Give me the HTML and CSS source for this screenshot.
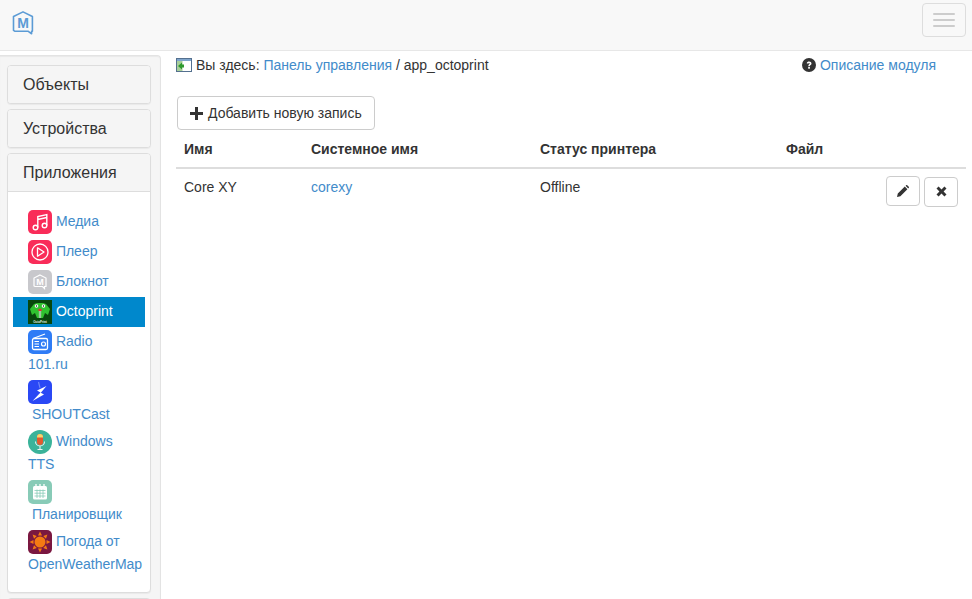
FILE: index.html
```html
<!DOCTYPE html>
<html lang="ru">
<head>
<meta charset="utf-8">
<title>app_octoprint</title>
<link rel="stylesheet" href="styles.css">
</head>
<body>
<nav class="navbar">
  <a class="brand" href="#">
    <svg width="24" height="24" viewBox="0 0 24 24"><path d="M11 .9 20.400 5.500V20.300H19.600V22.800L16.300 20.300H3L1.500 19.300V5.500Z" fill="none" stroke="#5b9bd5" stroke-width="1.600" stroke-linejoin="round"/><text x="11.200" y="16.500" text-anchor="middle" class="logo-m">M</text></svg>
  </a>
  <button class="toggle"><span></span><span></span><span></span></button>
</nav>
<div class="layout">
  <aside class="well">
    <div class="panel"><div class="panel-heading">Объекты</div></div>
    <div class="panel"><div class="panel-heading">Устройства</div></div>
    <div class="panel">
      <div class="panel-heading">Приложения</div>
      <ul class="apps">
        <li><a href="#"><svg class="ico" viewBox="0 0 24 24"><rect width="24" height="24" rx="5" fill="#f92c59"/><g fill="none" stroke="#fff" stroke-width="1.400"><circle cx="7.500" cy="17.500" r="2.300"/><circle cx="16.500" cy="15.500" r="2.300"/><path d="M9.800 17.500V6.500L18.800 4.500V15.500M9.800 9.500 18.800 7.500"/></g></svg>&nbsp;Медиа</a></li>
        <li><a href="#"><svg class="ico" viewBox="0 0 24 24"><rect width="24" height="24" rx="5" fill="#f92c59"/><circle cx="12" cy="12" r="8" fill="none" stroke="#fff" stroke-width="1.300"/><path d="M9.500 7.800 16 12 9.500 16.200Z" fill="none" stroke="#fff" stroke-width="1.300" stroke-linejoin="round"/></svg>&nbsp;Плеер</a></li>
        <li><a href="#"><svg class="ico" viewBox="0 0 24 24"><rect width="24" height="24" rx="5" fill="#c8c8cc"/><path d="M12 5 18 8V16.500H16.500V18.500L14.500 16.500H7L6 16V8Z" fill="none" stroke="#fff" stroke-width="1.200"/><text x="12" y="15" text-anchor="middle" class="logo-s">M</text></svg>&nbsp;Блокнот</a></li>
        <li class="active"><a href="#"><svg class="ico" viewBox="0 0 24 24"><rect width="24" height="24" fill="#07470c"/><path d="M2 9 6 4 9 3H15L18 4 22 9 20 15 17 13 15 18H9L7 13 4 15Z" fill="#2fc22f"/><circle cx="8.500" cy="6" r="1.800" fill="#fff"/><circle cx="15.500" cy="6" r="1.800" fill="#fff"/><circle cx="8.500" cy="6" r=".7" fill="#111"/><circle cx="15.500" cy="6" r=".7" fill="#111"/><ellipse cx="12" cy="10" rx="1.800" ry="1.200" fill="#d33"/><rect x="10.800" y="11" width="2.400" height="7" fill="#9bc8a0"/><text x="12" y="22.500" text-anchor="middle" class="logo-o">OctoPrint</text></svg>&nbsp;Octoprint</a></li>
        <li><a href="#"><svg class="ico" viewBox="0 0 24 24"><rect width="24" height="24" rx="5" fill="#2f7cf6"/><path d="M5 8.500 17 4" stroke="#fff" stroke-width="1.200"/><rect x="4.500" y="8.500" width="15" height="11" rx="1.500" fill="none" stroke="#fff" stroke-width="1.300"/><path d="M6.500 11.500H11M6.500 14H11M6.500 16.500H11" stroke="#fff"/><circle cx="15.500" cy="14" r="2" fill="none" stroke="#fff" stroke-width="1.200"/></svg>&nbsp;Radio 101.ru</a></li>
        <li><a href="#"><svg class="ico" viewBox="0 0 24 24"><rect width="24" height="24" rx="5" fill="#2a48f5"/><path d="M10.500 2 12 8" stroke="#6f86fa" stroke-width="1.200"/><path d="M18.500 6 9 10.500 12.500 12.500 4.500 21 16 14.500 12.800 12.800Z" fill="#fff"/></svg>&nbsp;SHOUTCast</a></li>
        <li><a href="#"><svg class="ico" viewBox="0 0 24 24"><circle cx="12" cy="12" r="12" fill="#3ab39a"/><rect x="9" y="4" width="6" height="11" rx="3" fill="#e2592f"/><path d="M9 7.500V7a3 3 0 0 1 6 0v.5Z" fill="#f5d76e"/><path d="M7.500 11.500a4.500 4.500 0 0 0 9 0M12 16V19M9.500 19.500H14.500" fill="none" stroke="#e8f5f1" stroke-width="1.100"/></svg>&nbsp;Windows TTS</a></li>
        <li><a href="#"><svg class="ico" viewBox="0 0 24 24"><rect width="24" height="24" rx="5" fill="#88cbb7"/><rect x="5" y="6" width="14" height="13.500" rx="1.500" fill="#fff"/><path d="M8 4V7.500M12 4V7.500M16 4V7.500" stroke="#fff" stroke-width="1.300"/><path d="M6.500 10.500H17.500M6.500 13.200H17.500M6.500 16H17.500M9 9.500V18M12 9.500V18M15 9.500V18" stroke="#88cbb7" stroke-width=".8"/></svg>&nbsp;Планировщик</a></li>
        <li><a href="#"><svg class="ico" viewBox="0 0 24 24"><rect width="24" height="24" rx="5" fill="#7a1740"/><g fill="#f47a12"><path d="M12 1.500 14 5.500H10ZM12 22.500 14 18.500H10ZM1.500 12 5.500 10V14ZM22.500 12 18.500 10V14ZM4.600 4.600 8.800 6 6 8.800ZM19.400 4.600 18 8.800 15.200 6ZM4.600 19.400 6 15.200 8.800 18ZM19.400 19.400 15.200 18 18 15.200Z"/><circle cx="12" cy="12" r="5.500"/></g></svg>&nbsp;Погода от OpenWeatherMap</a></li>
      </ul>
    </div>
    <div class="panel"><div class="panel-heading">&nbsp;</div></div>
  </aside>
  <main class="content">
    <div class="crumbs">
      <div class="crumb-left">
        <svg class="crumb-icon" width="16" height="16" viewBox="0 0 16 16"><rect x=".5" y="1.500" width="15" height="13" fill="#fff" stroke="#54708f"/><rect x="1" y="2" width="14" height="2" fill="#7fa5cc"/><rect x="1" y="4" width="5.500" height="10" fill="#a9cf9a"/><path d="M2 9 6 5.500V7.500H8V10.500H6V12.500Z" fill="#2e9a2e"/></svg>
        <span>Вы здесь: <a href="#">Панель управления</a> / app_octoprint</span>
      </div>
      <div class="crumb-right">
        <svg width="14" height="14" viewBox="0 0 14 14"><circle cx="7" cy="7" r="7" fill="#333"/><path d="M4.700 5.300C4.900 4 6 3.400 7.100 3.400 8.500 3.400 9.500 4.200 9.500 5.400 9.500 6.900 7.800 7 7.800 8.300H6.200C6.200 6.500 7.700 6.300 7.700 5.500 7.700 5.100 7.400 4.900 7 4.900 6.600 4.900 6.300 5.200 6.200 5.700Z" fill="#fff"/><rect x="6.200" y="9" width="1.700" height="1.700" fill="#fff"/></svg>
        <a href="#">Описание модуля</a>
      </div>
    </div>
    <button class="btn add">
      <svg width="13" height="13" viewBox="0 0 13 13"><path d="M5 0H8V5H13V8H8V13H5V8H0V5H5Z" fill="#333"/></svg>
      Добавить новую запись
    </button>
    <table class="grid">
      <thead>
        <tr><th class="c1">Имя</th><th class="c2">Системное имя</th><th class="c3">Статус принтера</th><th class="c4">Файл</th><th></th></tr>
      </thead>
      <tbody>
        <tr>
          <td>Core XY</td>
          <td><a href="#">corexy</a></td>
          <td>Offline</td>
          <td></td>
          <td class="actions">
            <button class="btn small"><svg width="12" height="12" viewBox="0 0 12 12"><path d="M0 12 .8 8.600 7.800 1.600 10.400 4.200 3.400 11.200ZM8.600.8 9.200.2C9.500-.1 9.900-.1 10.200.2L11.800 1.800C12.100 2.100 12.100 2.500 11.800 2.800L11.200 3.400Z" fill="#333"/></svg></button>
            <button class="btn small"><svg width="11" height="11" viewBox="0 0 11 11"><path d="M2.600.5 5.500 3.400 8.400.5 10.500 2.600 7.600 5.500 10.500 8.400 8.400 10.500 5.500 7.600 2.600 10.500.5 8.400 3.400 5.500.5 2.600Z" fill="#333"/></svg></button>
          </td>
        </tr>
      </tbody>
    </table>
  </main>
</div>
</body>
</html>
```
FILE: styles.css
```css
* { box-sizing: border-box; }
html, body { height: 100%; }
body {
  margin: 0;
  overflow: hidden;
  background: #fff;
  color: #333;
  font: 14px/20px "Liberation Sans", Arial, sans-serif;
}
a { color: #428bca; text-decoration: none; }
.navbar {
  display: flex;
  justify-content: space-between;
  align-items: flex-start;
  height: 51px;
  padding: 3px 6px 0 12px;
  background: #f8f8f8;
  border-bottom: 1px solid #e7e7e7;
}
.brand { display: block; margin-top: 8px; height: 24px; line-height: 0; }
.logo-m { font: bold 14px "Liberation Sans", sans-serif; fill: #5b9bd5; }
.logo-s { font: bold 9px "Liberation Sans", sans-serif; fill: #fff; }
.logo-o { font: bold 3px "Liberation Sans", sans-serif; fill: #e6f2e6; }
.toggle {
  display: flex;
  flex-direction: column;
  gap: 4px;
  width: 44px;
  height: 34px;
  padding: 9px 10px;
  background: transparent;
  border: 1px solid #ddd;
  border-radius: 4px;
}
.toggle span { display: block; width: 22px; height: 2px; background: #ccc; border-radius: 1px; }
.layout { display: flex; align-items: flex-start; padding-top: 4px; }
.well {
  flex: none;
  width: 161px;
  padding: 9px 9px 0 7px;
  background: #f5f5f5;
  border: 1px solid #e3e3e3;
  border-width: 1px 1px 0 0;
  border-top-right-radius: 4px;
  box-shadow: inset 0 1px 1px rgba(0, 0, 0, .05);
}
.panel {
  margin-bottom: 5px;
  background: #fff;
  border: 1px solid #ddd;
  border-radius: 4px;
  box-shadow: 0 1px 1px rgba(0, 0, 0, .05);
  overflow: hidden;
}
.panel-heading {
  padding: 10px 15px;
  background: #f5f5f5;
  font-size: 16px;
  line-height: 17px;
}
.apps {
  list-style: none;
  margin: 0;
  padding: 15px 5px;
  border-top: 1px solid #ddd;
}
.apps a { display: block; padding: 3px 15px; }
.apps .active a { background: #0088cc; color: #fff; }
.ico {
  width: 24px;
  height: 24px;
  vertical-align: middle;
}
.content { flex: 1; min-width: 0; padding: 0 6px 0 15px; }
.crumbs {
  display: flex;
  justify-content: space-between;
  height: 41px;
  padding-right: 30px;
}
.crumb-left, .crumb-right { display: flex; align-items: center; height: 20px; }
.crumb-icon { margin-right: 4px; }
.crumb-right svg { margin-right: 4px; }
.btn {
  background: #fff;
  border: 1px solid #ccc;
  border-radius: 4px;
  color: #333;
  font: inherit;
  padding: 0;
}
.add {
  display: flex;
  align-items: center;
  gap: 5px;
  height: 34px;
  margin-left: 1px;
  padding: 0 12px;
}
.grid { width: 100%; margin-top: 1px; border-collapse: collapse; table-layout: fixed; }
.grid th, .grid td { padding: 8px 7px 8px 8px; text-align: left; vertical-align: top; }
.grid th { border-bottom: 2px solid #ddd; }
.c1 { width: 127px; }
.c2 { width: 229px; }
.c3 { width: 246px; }
.c4 { width: 90px; }
.grid .actions { padding: 7px 8px 7px 0; text-align: right; }
.small {
  display: inline-flex;
  align-items: center;
  justify-content: center;
  width: 34px;
  height: 30px;
}
```
